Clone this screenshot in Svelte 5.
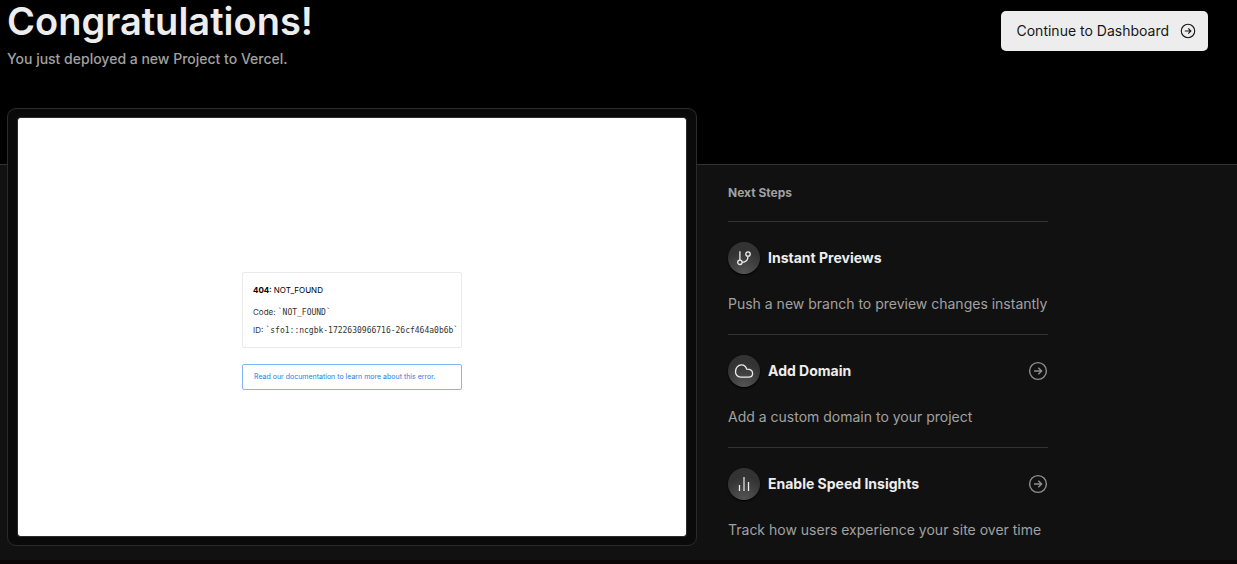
<script>
  const steps = [
    { icon: 'branch', title: 'Instant Previews', text: 'Push a new branch to preview changes instantly', link: false },
    { icon: 'cloud', title: 'Add Domain', text: 'Add a custom domain to your project', link: true },
    { icon: 'bars', title: 'Enable Speed Insights', text: 'Track how users experience your site over time', link: true },
  ];
</script>

{#snippet arrow(size)}
  <svg width={size} height={size} viewBox="0 0 20 20" fill="none" stroke="currentColor" stroke-width="1.4" aria-hidden="true">
    <circle cx="10" cy="10" r="8.4" />
    <path d="M6 10h7.400M10.300 6.700 13.600 10l-3.300 3.300" />
  </svg>
{/snippet}

<div class="page">
  <header>
    <div class="intro">
      <h1>Congratulations!</h1>
      <p>You just deployed a new Project to Vercel.</p>
    </div>
    <button type="button" class="continue">
      Continue to Dashboard
      {@render arrow(16)}
    </button>
  </header>

  <main>
    <div class="preview">
      <div class="screen">
        <div class="error">
          <div class="details">
            <p class="status"><strong>404</strong>: NOT_FOUND</p>
            <p>Code: <code>`NOT_FOUND`</code></p>
            <p>ID: <code>`sfo1::ncgbk-1722630966716-26cf464a0b6b`</code></p>
          </div>
          <a class="docs" href="#docs">Read our documentation to learn more about this error.</a>
        </div>
      </div>
    </div>

    <section class="steps">
      <h2>Next Steps</h2>
      <ul>
        {#each steps as step}
          <li>
            <div class="row">
              <span class="badge">
                <svg width="20" height="20" viewBox="0 0 20 20" fill="none" stroke="currentColor" stroke-width="1.3" aria-hidden="true">
                  {#if step.icon === 'branch'}
                    <circle cx="5.9" cy="14.3" r="2.2" />
                    <circle cx="14" cy="6" r="2.2" />
                    <path d="M5.9 3.200v8.900M14 8.200c0 3.800-2.300 5.900-5.900 6.100" />
                  {:else if step.icon === 'cloud'}
                    <path d="M6.500 16.100a5.200 5.200 0 0 1-5-5.300C1.500 7 4 3.800 7.500 3.800c2.700 0 4.500 1.700 5.200 4.400 3.600 0 5.900 1.600 5.900 4.300 0 2.100-1.700 3.600-4 3.600Z" />
                  {:else}
                    <path d="M5.500 11v6M14.500 8v9" />
                    <path d="M10 3v14" stroke-width="2" opacity="0.6" />
                  {/if}
                </svg>
              </span>
              <h3>{step.title}</h3>
              {#if step.link}
                <a class="go" href="#{step.icon}" aria-label={step.title}>{@render arrow(20)}</a>
              {/if}
            </div>
            <p>{step.text}</p>
          </li>
        {/each}
      </ul>
    </section>
  </main>
</div>

<style>
  :global(body) {
    margin: 0;
    background: #0a0506;
  }

  .page {
    font-family: Inter, 'Liberation Sans', sans-serif;
    color: #ededed;
    background: #000;
  }

  h1, h2, h3, p, ul {
    margin: 0;
    padding: 0;
  }

  header {
    display: flex;
    justify-content: space-between;
    align-items: flex-start;
    box-sizing: border-box;
    min-height: 164px;
    padding: 0 29px 0 7px;
  }

  h1 {
    font-size: 38px;
    line-height: 42px;
    font-weight: 600;
  }

  .intro p {
    margin-top: 6px;
    font-size: 14px;
    line-height: 22px;
    font-weight: 500;
    color: #a1a1a1;
  }

  .continue {
    display: flex;
    align-items: center;
    gap: 11px;
    height: 40px;
    margin-top: 11px;
    padding: 0 12px 0 16px;
    border: 0;
    border-radius: 5px;
    background: #ededed;
    color: #171717;
    font: 400 14px/20px Inter, 'Liberation Sans', sans-serif;
    white-space: nowrap;
  }

  main {
    display: grid;
    grid-template-columns: minmax(0, 690px) 320px;
    column-gap: 31px;
    align-items: start;
    padding: 0 7px 14px;
    border-top: 1px solid #333;
    background: #111;
  }

  .preview {
    margin-top: -57px;
    padding: 8px 9px;
    border: 1px solid #2b2b2b;
    border-radius: 9px;
    background: #0a0a0a;
  }

  .screen {
    display: flex;
    align-items: center;
    justify-content: center;
    aspect-ratio: 668 / 418;
    border: 1px solid #2b2b2b;
    border-radius: 3px;
    background: #fff;
    background-clip: padding-box;
  }

  .error {
    width: 220px;
    padding-top: 8px;
    color: #333;
  }

  .details {
    box-sizing: border-box;
    padding: 8px 10px;
    border: 1px solid #eaeaea;
    border-radius: 2px;
    white-space: nowrap;
  }

  .details p {
    font-size: 8px;
    line-height: 18px;
  }

  .details .status {
    margin-bottom: 4px;
    color: #000;
  }

  code {
    font: 8px/16px 'DejaVu Sans Mono', monospace;
  }

  .docs {
    display: block;
    margin-top: 16px;
    padding: 4px 11px;
    border: 1px solid #7db8f8;
    border-radius: 2px;
    box-sizing: border-box;
    color: #2a7de1;
    font-size: 7px;
    line-height: 16px;
    text-decoration: none;
    white-space: nowrap;
  }

  h2 {
    padding: 18px 0;
    font-size: 12px;
    line-height: 20px;
    font-weight: 700;
    color: #a1a1a1;
  }

  ul {
    list-style: none;
  }

  li {
    border-top: 1px solid #333;
    padding: 20px 0;
  }

  li:last-child {
    padding-bottom: 0;
  }

  .row {
    display: flex;
    align-items: center;
    gap: 8px;
  }

  .badge {
    display: flex;
    align-items: center;
    justify-content: center;
    width: 32px;
    height: 32px;
    border-radius: 50%;
    background: radial-gradient(circle at 50% 100%, #555 0, #333 65%);
    box-shadow: 0 1px 2px #000;
  }

  h3 {
    font-size: 14px;
    line-height: 20px;
    font-weight: 700;
  }

  .go {
    display: flex;
    margin-left: auto;
    color: #8f8f8f;
  }

  li p {
    margin-top: 20px;
    font-size: 14px;
    line-height: 20px;
    color: #a1a1a1;
  }
</style>
